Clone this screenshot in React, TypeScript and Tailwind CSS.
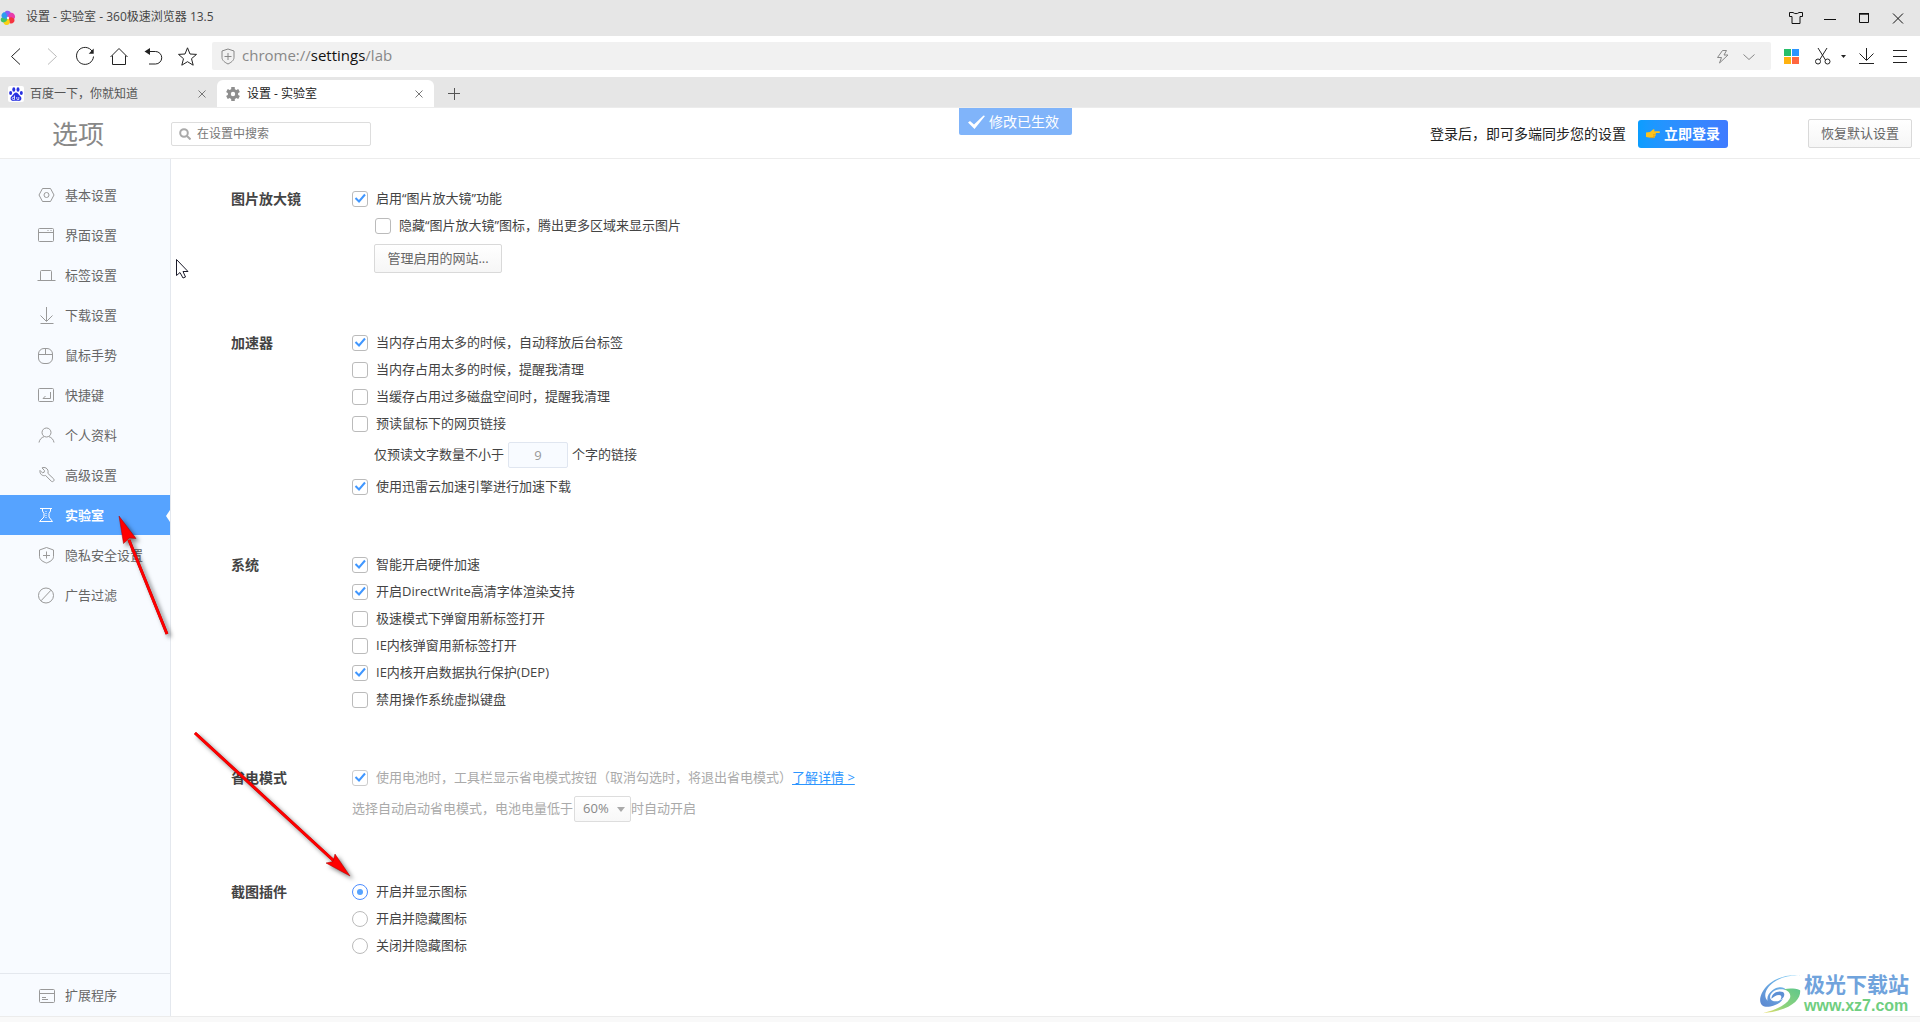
import {useState} from "react";
import type {ReactNode} from "react";
import clsx from "clsx";

const line = {fill: "none", stroke: "currentColor", strokeWidth: 1} as const;

const menu: {label: string; icon: ReactNode}[] = [
    {
        label: "基本设置",
        icon: <><path d="M4.500 1.500h8l3.500 6.500-3.500 6.500h-8l-3.500-6.500z"/><circle cx="8.500" cy="8" r="2.500"/></>,
    },
    {
        label: "界面设置",
        icon: <><rect x="0.500" y="1.500" width="15" height="13" rx="1"/><path d="M.5 5.500h15M9.500 3.500h1M12.500 3.500h1"/></>,
    },
    {
        label: "标签设置",
        icon: <path d="M-.5 13.500h18M2.500 13.500V4.500a1 1 0 0 1 1-1h9a1 1 0 0 1 1 1v9"/>,
    },
    {
        label: "下载设置",
        icon: <path d="M2.500 16.500h13M8.500 0v14M2.500 8.500l6 6 6-6"/>,
    },
    {
        label: "鼠标手势",
        icon: <><rect x="0.500" y="1.500" width="14" height="15" rx="5.500"/><path d="M.5 7.500h14M7.500 1.500v6"/></>,
    },
    {
        label: "快捷键",
        icon: <><rect x="0.500" y="1.500" width="15" height="13" rx="1"/><path d="M12.500 5v6.500H5M7.500 9l-2.500 2.500"/></>,
    },
    {
        label: "个人资料",
        icon: <><circle cx="8.500" cy="5.500" r="4.500"/><path d="M1 15.500c.5-3 2.500-5 5-5.800M16 15.500c-.5-3-2.500-5-5-5.800"/></>,
    },
    {
        label: "高级设置",
        icon: <path d="M8 1c-1.200-.6-2.800-.7-4-.1l2.500 2.700-.4 1.700-1.700.5L2 3.400c-.6 3.600 2.400 6 5.600 5.100l5.700 5.700c1.500 1.300 3.600-.6 2.400-2.300L9.900 6.400C10.600 4 9.700 2 8 1z"/>,
    },
    {
        label: "实验室",
        icon: <><path d="M2 1.500h12M4.500 1.500v2.500L6 6.500V10L1.500 14.500h13L11 10V6.500l1.500-2.500V1.500"/><path d="M8 4v7" strokeDasharray="1 1"/></>,
    },
    {
        label: "隐私安全设置",
        icon: <><path d="M8.500.5l7 2.500v6.500c0 3.500-4 5.500-7 6.500-3-1-7-3-7-6.500V3z"/><path d="M8.500 4.500v7M5 8.500h7"/></>,
    },
    {
        label: "广告过滤",
        icon: <><circle cx="8" cy="8.500" r="7.500"/><path d="M3 13.800L13 3.200"/></>,
    },
];

function SideIcon({className, children}: {className?: string; children: ReactNode}) {
    return (
        <svg width="18" height="18" viewBox="0 0 18 18" className={clsx("shrink-0 overflow-visible", className)} {...line} aria-hidden="true">
            {children}
        </svg>
    )
}

function Check({label, checked, disabled, nested}: {label: string; checked?: boolean; disabled?: boolean; nested?: boolean}) {
    return (
        <label className={clsx("flex h-[27px] items-center gap-2", nested && "ml-[23px]", disabled && "text-[#aaa]")}>
            <span className="grid">
                <input
                    type="checkbox"
                    defaultChecked={checked}
                    disabled={disabled}
                    className="peer col-start-1 row-start-1 size-4 appearance-none rounded-[3px] border border-[#bbb] bg-white disabled:border-[#ccc]"
                />
                <svg width="16" height="16" viewBox="0 0 16 16" className="pointer-events-none invisible col-start-1 row-start-1 peer-checked:visible" aria-hidden="true">
                    <path d="M3.500 7l3.500 3.500 6-7" fill="none" stroke="#4097ff" strokeWidth="2"/>
                </svg>
            </span>
            <span>{label}</span>
        </label>
    )
}

function Radio({label, checked}: {label: string; checked?: boolean}) {
    return (
        <label className="flex h-[27px] items-center gap-2">
            <span className="grid">
                <input
                    type="radio"
                    name="screenshot"
                    defaultChecked={checked}
                    className="peer col-start-1 row-start-1 size-4 appearance-none rounded-full border border-[#bbb] bg-white checked:border-[#4c8dff]"
                />
                <span className="pointer-events-none invisible col-start-1 row-start-1 m-[5px] size-1.5 rounded-full bg-[#56a3ff] peer-checked:visible"/>
            </span>
            <span>{label}</span>
        </label>
    )
}

function Section({title, children}: {title: string; children: ReactNode}) {
    return (
        <section className="flex">
            <h2 className="h-[27px] w-[121px] shrink-0 text-sm leading-[27px] font-bold text-[#444]">{title}</h2>
            <div>{children}</div>
        </section>
    )
}

function IconButton({label, className, children}: {label: string; className?: string; children: ReactNode}) {
    return (
        <button type="button" aria-label={label} className={clsx("flex h-7 shrink-0 items-center justify-center", className ?? "w-[34px]")}>
            <svg width="20" height="20" viewBox="0 0 20 20" className="shrink-0 overflow-visible" {...line}>
                {children}
            </svg>
        </button>
    )
}

function TitleBar() {
    return (
        <div className="flex h-9 items-center bg-[#e6e6e6] pr-[5px] text-xs text-[#444]">
            <svg width="16" height="16" viewBox="-8 -8 16 16" aria-hidden="true">
                <path d="M0 0C-4-1-5-5-2-7 1-8 3-6 3-4z" fill="#8b5cf6"/>
                <path d="M0 0C0-4 3-7 6-4 8-1 7 1 4 2z" fill="#e93cac"/>
                <path d="M0 0C4-2 8 1 6 4 4 6 2 6 1 4z" fill="#f5333f"/>
                <path d="M0 0C3 3 2 7-1 7-4 7-5 5-4 3z" fill="#fbd113"/>
                <path d="M0 0C-1 4-5 6-7 3-8 0-6-1-4-1z" fill="#43c463"/>
                <path d="M0 0C-4 2-8-1-6-4-5-6-3-6-2-5z" fill="#2d9cf0"/>
                <circle r="1.200" fill="#f4f4f4"/>
            </svg>
            <span className="ml-2.5 pb-0.5">设置 - 实验室 - 360极速浏览器 13.5</span>
            <div className="ml-auto flex text-[#111]">
                <IconButton label="皮肤">
                    <path d="M7 4.500H3.500v4h2.500v7h8v-7h2.500v-4H13c-1.500 1.500-4.500 1.500-6 0z"/>
                </IconButton>
                <IconButton label="最小化"><path d="M4 11.500h12"/></IconButton>
                <IconButton label="最大化"><path d="M5 5.500h10M5.500 5v9.500h9V5M5 6.200h10"/></IconButton>
                <IconButton label="关闭"><path d="M5 5.500l10 10M15 5.500l-10 10"/></IconButton>
            </div>
        </div>
    )
}

function ToolBar() {
    return (
        <div className="flex h-[41px] items-center bg-white pr-[3px] pb-px text-[#222]">
            <IconButton label="后退"><path d="M13 2.500L4.500 10.500l8.500 8"/></IconButton>
            <IconButton label="前进" className="w-[34px] text-[#bbb]"><path d="M7 2.500l8.500 8-8.500 8"/></IconButton>
            <IconButton label="刷新">
                <path d="M17.300 5.500A8.500 8.500 0 1 0 18.500 10.500"/>
                <path d="M18.700 2.500v5.300h-5z" fill="currentColor" stroke="none"/>
            </IconButton>
            <IconButton label="主页"><path d="M1.500 11L10 2.500l8.500 8.500M3.500 9.500v9h13v-9"/></IconButton>
            <IconButton label="恢复标签">
                <path d="M4 5.500h8.500a6 6 0 0 1 0 12.500H6"/>
                <path d="M7 2v7L1.500 5.500z" fill="currentColor" stroke="none"/>
            </IconButton>
            <IconButton label="收藏">
                <path d="M10.500 1.800l2.500 6.200 6.500.4-5 4.300 1.700 6.500-5.700-3.500-5.700 3.500 1.700-6.500-5-4.300 6.500-.4z"/>
            </IconButton>
            <div className="ml-2 flex h-7 flex-1 items-center rounded-xs bg-[#f1f1f1] pr-[9px] pl-2 text-[#888]">
                <svg width="16" height="18" viewBox="0 0 16 18" {...line} aria-hidden="true">
                    <path d="M8 2l6 2v6.500c0 3-3 5-6 6.500-3-1.500-6-3.500-6-6.500V4z"/>
                    <path d="M8 6v7M4.500 9.500h7"/>
                </svg>
                <div className="ml-1.5 pb-0.5 text-[15px] leading-5">
                    chrome://<span className="text-[#111]">settings</span>/lab
                </div>
                <div className="ml-auto flex">
                    <IconButton label="极速模式" className="w-[26px]">
                        <path d="M12 4.500H9.500L4.500 11.500h4L6.500 17l8.500-8h-4l2.500-4.500z"/>
                    </IconButton>
                    <IconButton label="展开" className="w-[26px]"><path d="M4.500 8.500l5.500 5 5.500-5"/></IconButton>
                </div>
            </div>
            <IconButton label="应用" className="ml-[3px] w-[34px]">
                <g stroke="none">
                    <path d="M3 3h7v7H3z" fill="#27bf6a"/>
                    <path d="M11 3h7v7h-7z" fill="#2b95ff"/>
                    <path d="M3 11h7v7H3z" fill="#ffb20f"/>
                    <path d="M11 11h7v7h-7z" fill="#ff6640"/>
                </g>
            </IconButton>
            <IconButton label="截图" className="w-[30px]">
                <path d="M5 2l7.500 12M14 2L6.500 14"/>
                <circle cx="5" cy="15.500" r="2.500"/>
                <circle cx="14.500" cy="15.500" r="2.500"/>
            </IconButton>
            <button type="button" aria-label="截图选项" className="flex h-7 w-[11px] items-center justify-center">
                <svg width="5" height="3" viewBox="0 0 5 3"><path d="M0 0h5L2.500 3z" fill="currentColor"/></svg>
            </button>
            <IconButton label="下载"><path d="M3 17.500h15M10.500 2v12M3.500 7.500l7 7 7-7"/></IconButton>
            <IconButton label="菜单"><path d="M3 4.500h14M3 10.500h14M3 16.500h14"/></IconButton>
        </div>
    )
}

function TabClose() {
    return (
        <button type="button" aria-label="关闭标签" className="ml-auto flex size-4 items-center justify-center text-[#777]">
            <svg width="8" height="8" viewBox="0 0 8 8" {...line}><path d="M.5.5l7 7M7.500.5l-7 7"/></svg>
        </button>
    )
}

function TabStrip() {
    return (
        <div className="flex h-[30px] items-end bg-[#e6e6e6] text-xs">
            <div className="flex h-[27px] w-[217px] items-center pr-[7px] pl-2 text-[#555]">
                <svg width="16" height="16" viewBox="0 0 16 16" aria-hidden="true">
                    <rect width="16" height="16" rx="2" fill="#fff"/>
                    <g fill="#2932e1">
                        <ellipse cx="2.600" cy="7" rx="1.500" ry="2"/>
                        <ellipse cx="5.800" cy="3.500" rx="1.500" ry="2.200"/>
                        <ellipse cx="10" cy="3.500" rx="1.500" ry="2.200"/>
                        <ellipse cx="13.300" cy="7" rx="1.500" ry="2"/>
                        <path d="M8 6.500c1.700 0 2.200 1.600 3.400 2.700 1.300 1.200 2.400 2.300 1.900 4.100-.5 1.600-2 1.700-3.300 1.500-1.300-.2-2.700-.2-4 0-1.300.2-2.800.1-3.300-1.500-.5-1.800.6-2.900 1.900-4.100C5.800 8.100 6.300 6.500 8 6.500z"/>
                    </g>
                    <path d="M6.500 9.500v4M6.500 11.300H5.300a1 1 0 0 0 0 2.200h1.200M8.800 11v1.700q0 .8.900.8h1.100V11" fill="none" stroke="#fff" strokeWidth=".8"/>
                </svg>
                <span className="ml-1.5">百度一下，你就知道</span>
                <TabClose/>
            </div>
            <div className="flex h-[27px] w-[217px] items-center rounded-t-md bg-white pr-[7px] pl-[9px] text-[#222]">
                <svg width="14" height="14" viewBox="-7 -7 14 14" fill="#8e8e8e" aria-hidden="true">
                    <rect x="-1.800" y="-7" width="3.600" height="14" rx=".5"/>
                    <rect x="-1.800" y="-7" width="3.600" height="14" rx=".5" transform="rotate(60)"/>
                    <rect x="-1.800" y="-7" width="3.600" height="14" rx=".5" transform="rotate(120)"/>
                    <circle r="5.200"/>
                    <circle r="2.200" fill="#fff"/>
                </svg>
                <span className="ml-[7px]">设置 - 实验室</span>
                <TabClose/>
            </div>
            <button type="button" aria-label="新建标签" className="ml-3.5 flex h-[27px] items-center text-[#555]">
                <svg width="12" height="12" viewBox="0 0 12 12" {...line}><path d="M6.500 0v12M0 5.500h12"/></svg>
            </button>
        </div>
    )
}

function PageHeader() {
    return (
        <header className="relative flex h-[52px] items-center border-t border-b border-[#ececec] bg-white pt-px pr-2">
            <h1 className="w-[171px] pl-[52px] text-[26px] leading-8 text-[#888]">选项</h1>
            <label className="flex h-6 w-[200px] items-center gap-1.5 rounded-xs border border-[#ddd] px-[7px]">
                <svg width="12" height="12" viewBox="0 0 12 12" fill="none" stroke="#aaa" strokeWidth="2" aria-hidden="true">
                    <circle cx="5" cy="5" r="3.800"/>
                    <path d="M8 8l3.500 3.500"/>
                </svg>
                <input type="text" aria-label="在设置中搜索" placeholder="在设置中搜索" className="min-w-0 flex-1 text-xs outline-none placeholder:text-[#777]"/>
            </label>
            <div className="ml-auto flex items-center">
                <span className="text-sm text-[#222]">登录后，即可多端同步您的设置</span>
                <button type="button" className="ml-3 flex h-7 w-[90px] items-center justify-center gap-1 rounded-[3px] bg-linear-to-r from-[#0a9dff] to-[#3f7bff] text-sm font-bold text-white">
                    <svg width="14" height="10" viewBox="0 0 14 10" aria-hidden="true">
                        <path d="M0 3.500l4-.5L7 .5c1-.7 2 .3 1.300 1.200L7.800 2.300h5.400c1 0 1 1.700 0 1.700H9.500c.7.500.6 1.400-.1 1.700.5.600.3 1.400-.4 1.600.2.900-.4 1.500-1.300 1.500H4.500L0 8z" fill="#fcc21b"/>
                        <path d="M4 8.800h4M7 5.700h2.400M7 7.300h2" stroke="#d98e12" strokeWidth=".6"/>
                    </svg>
                    立即登录
                </button>
                <button type="button" className="ml-20 h-[29px] w-[104px] rounded-xs border border-[#d9d9d9] bg-linear-to-b from-white to-[#f6f6f6] text-[13px] text-[#666]">
                    恢复默认设置
                </button>
            </div>
            <div role="status" className="absolute top-0 left-1/2 -ml-px flex h-[27px] w-[113px] items-center justify-center gap-1 rounded-b-xs bg-[#80b4fa] pr-1 text-sm text-white">
                <svg width="17" height="14" viewBox="0 0 17 14" aria-hidden="true">
                    <path d="M0 7.500l2-1.500 4 3.500L15.500.5l1.500.5L6.500 14z" fill="#fff"/>
                </svg>
                修改已生效
            </div>
        </header>
    )
}

function Sidebar({active, onSelect}: {active: string; onSelect: (label: string) => void}) {
    return (
        <nav className="flex w-[171px] shrink-0 flex-col border-r border-[#e4e8ee] bg-[#f8fbff] pt-4 text-[13px] text-[#666]">
            {menu.map(({label, icon}) => (
                <a
                    key={label}
                    href="#"
                    onClick={() => onSelect(label)}
                    className={clsx("relative flex h-10 items-center gap-[9px] pt-0.5 pl-[38px]", label === active && "bg-[#56a3ff] font-bold text-white")}
                >
                    <SideIcon className={label === active ? "text-white" : "text-[#999]"}>{icon}</SideIcon>
                    {label}
                    {label === active && (
                        <svg width="4" height="12" viewBox="0 0 4 12" className="absolute right-0" aria-hidden="true">
                            <path d="M4 0v12L0 6z" fill="#fff"/>
                        </svg>
                    )}
                </a>
            ))}
            <a href="#" className="mt-auto flex h-[43px] items-center gap-[9px] border-t border-[#e4e8ee] pt-0.5 pl-[38px]">
                <SideIcon className="text-[#999]">
                    <rect x="1.500" y="2.500" width="15" height="13" rx="1"/>
                    <path d="M1.500 6.500h15M4 10.500h4M4 12.500h6"/>
                </SideIcon>
                扩展程序
            </a>
        </nav>
    )
}

function Settings() {
    return (
        <main className="flex flex-1 flex-col gap-[51px] overflow-hidden bg-white pt-[26px] pl-[60px] text-[13px] text-[#444]">
            <Section title="图片放大镜">
                <Check label="启用“图片放大镜”功能" checked/>
                <Check label="隐藏“图片放大镜”图标，腾出更多区域来显示图片" nested/>
                <div className="flex h-[39px] items-center">
                    <button type="button" className="ml-[22px] h-[29px] w-32 rounded-xs border border-[#d9d9d9] bg-linear-to-b from-white to-[#f6f6f6] text-[#666]">
                        管理启用的网站...
                    </button>
                </div>
            </Section>
            <Section title="加速器">
                <Check label="当内存占用太多的时候，自动释放后台标签" checked/>
                <Check label="当内存占用太多的时候，提醒我清理"/>
                <Check label="当缓存占用过多磁盘空间时，提醒我清理"/>
                <Check label="预读鼠标下的网页链接"/>
                <div className="ml-[22px] flex h-9 items-center gap-1">
                    <label htmlFor="preread">仅预读文字数量不小于</label>
                    <input id="preread" type="text" disabled defaultValue="9" className="h-[26px] w-[60px] rounded-xs border border-[#e0e6f0] bg-[#f8fbff] text-center text-[#999]"/>
                    <span>个字的链接</span>
                </div>
                <Check label="使用迅雷云加速引擎进行加速下载" checked/>
            </Section>
            <Section title="系统">
                <Check label="智能开启硬件加速" checked/>
                <Check label="开启DirectWrite高清字体渲染支持" checked/>
                <Check label="极速模式下弹窗用新标签打开"/>
                <Check label="IE内核弹窗用新标签打开"/>
                <Check label="IE内核开启数据执行保护(DEP)" checked/>
                <Check label="禁用操作系统虚拟键盘"/>
            </Section>
            <Section title="省电模式">
                <div className="flex items-center">
                    <Check label="使用电池时，工具栏显示省电模式按钮（取消勾选时，将退出省电模式）" checked disabled/>
                    <a href="#" className="text-[#2b95ff] underline underline-offset-2">了解详情 &gt;</a>
                </div>
                <div className="flex h-9 items-center text-[#aaa]">
                    <label htmlFor="battery">选择自动启动省电模式，电池电量低于</label>
                    <span className="ml-px grid items-center">
                        <select id="battery" disabled defaultValue="60%" className="col-start-1 row-start-1 h-[26px] w-[57px] appearance-none rounded-xs border border-[#ddd] bg-linear-to-b from-white to-[#f8f8f8] pl-2 text-[#888] opacity-100">
                            <option>60%</option>
                        </select>
                        <svg width="8" height="5" viewBox="0 0 8 5" className="pointer-events-none col-start-1 row-start-1 mr-1.5 justify-self-end" aria-hidden="true">
                            <path d="M0 0h8L4 5z" fill="#aaa"/>
                        </svg>
                    </span>
                    <span>时自动开启</span>
                </div>
            </Section>
            <Section title="截图插件">
                <Radio label="开启并显示图标" checked/>
                <Radio label="开启并隐藏图标"/>
                <Radio label="关闭并隐藏图标"/>
            </Section>
        </main>
    )
}

// Red pointers and the mouse cursor, drawn over the page
function Pointers() {
    return (
        <svg width="400" height="900" viewBox="0 0 400 900" className="pointer-events-none absolute top-0 left-0" aria-hidden="true">
            <g className="drop-shadow-[3px_3px_2px_rgba(0,0,0,0.5)]">
                <path d="M167 634L129 540" stroke="#b00000" strokeWidth="3"/>
                <path d="M167 634L129 540" stroke="#f00" strokeWidth="2.500"/>
                <path d="M119 516l17 22.500-6.500-.5-6 5.500z" fill="#f00" stroke="#a00000" strokeWidth=".5"/>
                <path d="M195 733L334 861" stroke="#b00000" strokeWidth="3"/>
                <path d="M195 733L334 861" stroke="#f00" strokeWidth="2.500"/>
                <path d="M350 876l-24-13 7-1.500 2-7.500z" fill="#f00" stroke="#a00000" strokeWidth=".5"/>
            </g>
            <path d="M176.500 259.500v16l3.500-3 3 5.500 2.500-1-2.500-5.500h5z" fill="#fff" stroke="#1b1b2a"/>
        </svg>
    )
}

function Watermark() {
    return (
        <div className="pointer-events-none absolute right-[11px] bottom-[6px] flex items-center gap-px">
            <svg width="44" height="42" viewBox="0 0 46 42" aria-hidden="true">
                <defs>
                    <linearGradient id="swirlBlue" x1="1" y1="0" x2="0" y2="1">
                        <stop offset="0" stopColor="#7ad0f7"/>
                        <stop offset="1" stopColor="#5c86cf"/>
                    </linearGradient>
                    <linearGradient id="swirlGreen" x1="1" y1="0" x2="0" y2="1">
                        <stop offset="0" stopColor="#5fc78b"/>
                        <stop offset=".6" stopColor="#8fd37c"/>
                        <stop offset="1" stopColor="#efe06a"/>
                    </linearGradient>
                </defs>
                <path d="M45 2C28-1 10 6 3 20c-5 11 1 16 9 14 6-1 11-4 13-8-4 3-11 4-13 0-2-5 4-10 11-10 2 0 4 .5 5 1-1-4-9-4-14 0-4 3-6 7-5 11-5-5-2-13 6-19C23 3 34 1 45 2z" fill="url(#swirlBlue)"/>
                <path d="M13 26c0-6 7-9 12-7 3 2 1 7-3 8 2-2 2-5-1-5s-6 2-8 4z" fill="#5c8fd4"/>
                <path d="M26 16c6-1 11-1 17 1 1 9-8 21-39 24 13-3 24-8 28-15 2-4 0-8-6-10z" fill="url(#swirlGreen)"/>
            </svg>
            <div className="font-bold">
                <div className="text-[21px] leading-6 text-[#70a3dc]">极光下载站</div>
                <div className="font-['Liberation_Sans',sans-serif] text-base leading-5 text-[#6fce80]">www.xz7.com</div>
            </div>
        </div>
    )
}

export default function App() {
    const [active, setActive] = useState("实验室")

    return (
        <div className="relative flex min-h-screen flex-col bg-white font-['Open_Sans','Noto_Sans_CJK_SC',sans-serif]">
            <TitleBar/>
            <ToolBar/>
            <TabStrip/>
            <PageHeader/>
            <div className="flex flex-1">
                <Sidebar active={active} onSelect={setActive}/>
                <Settings/>
            </div>
            <footer className="h-1.5 border-t border-[#ececec] bg-[#f9f9f9]"/>
            <Pointers/>
            <Watermark/>
        </div>
    )
}
